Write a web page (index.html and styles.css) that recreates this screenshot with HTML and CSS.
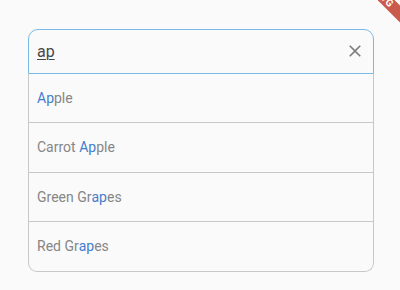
FILE: index.html
```html
<!DOCTYPE html>
<html>
<head>
<meta charset="utf-8">
<link rel="stylesheet" href="styles.css">
</head>
<body>
<div class="wrap">
  <div class="card">
    <div class="search">
      <span class="query">ap</span>
      <svg class="clear" viewBox="0 0 24 24" width="20" height="20"><path d="M19 6.41L17.59 5 12 10.59 6.41 5 5 6.41 10.59 12 5 17.59 6.41 19 12 13.41 17.59 19 19 17.59 13.41 12z" fill="#7f7f7f"/></svg>
    </div>
    <div class="list">
      <div class="row"><span class="hl">Ap</span>ple</div>
      <div class="row">Carrot <span class="hl">Ap</span>ple</div>
      <div class="row">Green Gr<span class="hl">ap</span>es</div>
      <div class="row">Red Gr<span class="hl">ap</span>es</div>
    </div>
  </div>
</div>
<div class="ribbon"><div class="ribbon-band">DEBUG</div></div>
</body>
</html>
```
FILE: styles.css
```css
html, body {
  margin: 0;
  padding: 0;
  background: #fafafa;
  font-family: Roboto, "Noto Sans", sans-serif;
  overflow: hidden;
}
.wrap {
  padding: 28.5px 26px 0 28px;
}
.card {
  width: 346px;
}
.search {
  box-sizing: border-box;
  height: 45px;
  border: 1px solid #7ab9e6;
  border-radius: 10px 10px 0 0;
  display: flex;
  align-items: center;
  justify-content: space-between;
  padding: 0 8px 0 8px;
}
.query {
  font-size: 16px;
  color: #484848;
  text-decoration: underline;
  text-decoration-thickness: 1px;
  text-underline-offset: 2px;
}
.clear {
  display: block;
}
.list {
  border: 1px solid #c8c8c8;
  border-top: none;
  border-radius: 0 0 9px 9px;
}
.row {
  box-sizing: border-box;
  height: 49.5px;
  display: flex;
  align-items: center;
  padding-left: 8px;
  font-size: 14px;
  color: #868686;
  border-bottom: 1px solid #c8c8c8;
  white-space: pre;
}
.row:last-child {
  border-bottom: none;
  height: 48.5px;
}
.hl {
  color: #447dd0;
}
.ribbon {
  position: fixed;
  top: 0;
  left: 378px;
  width: 22px;
  height: 22px;
  overflow: hidden;
}
.ribbon-band {
  position: absolute;
  left: -48.7px;
  top: -13.2px;
  width: 100px;
  height: 12px;
  line-height: 12px;
  background: #c95a4c;
  color: #fff;
  font-size: 10px;
  font-weight: bold;
  text-align: center;
  letter-spacing: 1px;
  transform: rotate(45deg);
}
```
